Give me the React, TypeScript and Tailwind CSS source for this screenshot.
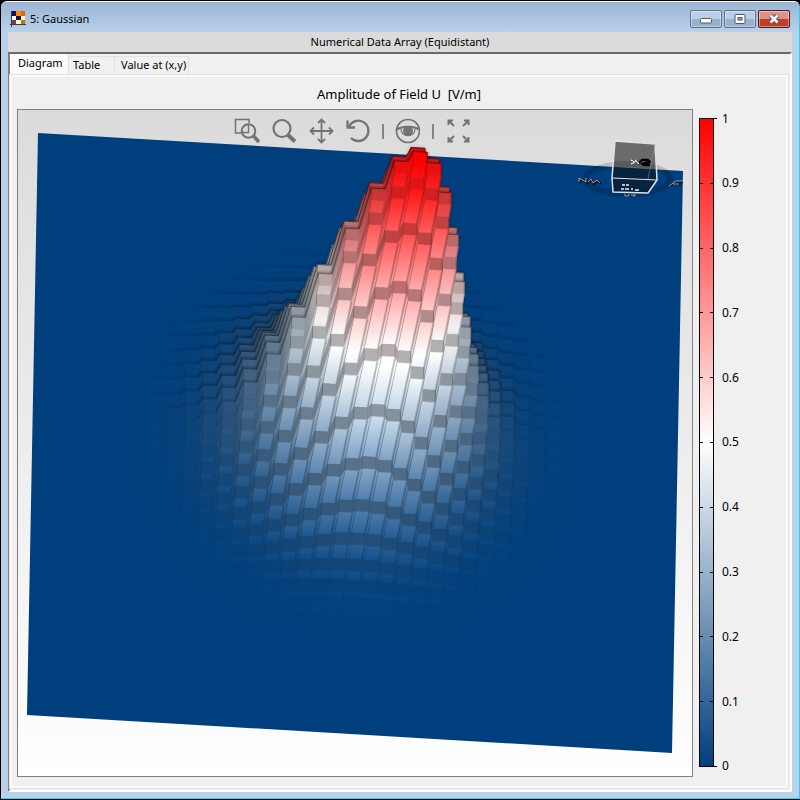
import React from 'react';

type Point = [number, number];
type Rgb = [number, number, number];
type Corner = { x: number; y: number; h: number };

const CELLS = 39;
const MID = (CELLS - 1) / 2;
const INSET = 0.09;
const ORIGIN: Point = [20, 23];
const AXIS_X: Point = [645 / CELLS, 38 / CELLS];
const AXIS_Y: Point = [-11 / CELLS, 582 / CELLS];
const AXIS_Z: Point = [65, -285];

const LOW: Rgb = [0, 63, 125];
const WHITE: Rgb = [255, 255, 255];
const HIGH: Rgb = [255, 0, 0];

const amplitude = (col: number, row: number) =>
  Math.exp(-((col - MID) ** 2) / 27.5 - (row - MID) ** 2 / 25.5);

const project = ({ x, y, h }: Corner): Point => [
  ORIGIN[0] + x * AXIS_X[0] + y * AXIS_Y[0] + h * AXIS_Z[0],
  ORIGIN[1] + x * AXIS_X[1] + y * AXIS_Y[1] + h * AXIS_Z[1],
];

const color = (value: number, light = 1) => {
  const from = value < 0.5 ? LOW : WHITE;
  const to = value < 0.5 ? WHITE : HIGH;
  const t = value < 0.5 ? value * 2 : value * 2 - 1;
  const rgb = from.map((c, i) => Math.min(255, Math.round((c + (to[i] - c) * t) * light)));
  return `rgb(${rgb.join(',')})`;
};

const poly = (corners: Corner[]) =>
  corners
    .map(project)
    .map((p) => `${p[0].toFixed(2)},${p[1].toFixed(2)}`)
    .join(' ');

// grows quickly for small steps, then levels off at max
const soften = (step: number, rate: number, max: number) => max * (1 - Math.exp(-Math.max(0, step) * rate));

// the four corners of a cell's flat top: back left, back right, front right, front left
const topOf = (col: number, row: number): Corner[] => {
  const h = amplitude(col, row);
  return [
    { x: col + INSET, y: row + INSET, h },
    { x: col + 1 - INSET, y: row + INSET, h },
    { x: col + 1 - INSET, y: row + 1 - INSET, h },
    { x: col + INSET, y: row + 1 - INSET, h },
  ];
};

// how brightly a top is lit, given how far its neighbours rise above it
const topLight = (col: number, row: number) => {
  const h = amplitude(col, row);
  const around = [amplitude(col, row + 1), amplitude(col, row - 1), amplitude(col - 1, row), amplitude(col + 1, row)];
  const buried = around.reduce((sum, n) => sum + Math.max(0, n - h), 0);
  return 1 - soften(buried, 9, 0.36);
};

interface SlopeProps {
  id: string;
  corners: Corner[];
  light: number;
}

const Slope: React.FC<SlopeProps> = ({ id, corners, light }) => {
  const heights = corners.map((c) => c.h);
  const top = Math.max(...heights);
  const bottom = Math.min(...heights);
  const fill = `url(#${id})`;
  return (
    <>
      <linearGradient id={id} x1="0" y1="0" x2="0" y2="1">
        <stop offset="0" stopColor={color(top, light)} />
        {top > 0.5 && bottom < 0.5 && <stop offset={(top - 0.5) / (top - bottom)} stopColor={color(0.5, light)} />}
        <stop offset="1" stopColor={color(bottom, light)} />
      </linearGradient>
      <polygon points={poly(corners)} fill={fill} stroke={fill} strokeWidth={0.5} />
    </>
  );
};

interface EdgeProps {
  corners: Corner[];
  width: number;
  opacity: number;
}

const Edge: React.FC<EdgeProps> = ({ corners, width, opacity }) =>
  opacity < 0.01 ? null : (
    <polyline points={poly(corners)} fill="none" stroke="#000" strokeWidth={width} strokeOpacity={opacity.toFixed(3)} />
  );

const Surface = () => {
  const shapes: React.ReactNode[] = [];
  for (let row = 2; row < CELLS - 2; row++) {
    // the columns lean to the right, so each row is painted from right to left
    for (let col = CELLS - 3; col >= 2; col--) {
      const h = amplitude(col, row);
      const back = amplitude(col, row - 1);
      const left = amplitude(col - 1, row);
      const right = amplitude(col + 1, row);
      if (Math.max(h, amplitude(col, row + 1), back, left, right) < 0.0003) continue;

      const light = topLight(col, row);
      const key = `${col}-${row}`;
      const top = topOf(col, row);
      const leftTop = topOf(col - 1, row);
      const outline = [leftTop[1], top[0], top[1]];
      const backDrop = h - back;
      const halo = soften(backDrop, 90, 0.22) * Math.exp(-Math.max(0, backDrop) * 14);
      shapes.push(
        <g key={`t${key}`}>
          <Edge corners={outline} width={6} opacity={halo * 0.7} />
          <Edge corners={outline} width={3} opacity={halo} />
          <polygon points={poly(top)} fill={color(h, light)} stroke={color(h, light)} strokeWidth={0.5} />
          <Slope
            id={`l${key}`}
            corners={[leftTop[1], top[0], top[3], leftTop[2]]}
            light={(light + topLight(col - 1, row)) / 2 - soften(Math.abs(h - left), 14, 0.08)}
          />
          <Edge corners={outline} width={1} opacity={soften(backDrop, 50, 0.55)} />
          <Edge corners={[top[1], top[2]]} width={1.5} opacity={soften(h - right, 40, 0.18)} />
          <Edge corners={[top[0], top[3]]} width={1} opacity={soften(h - left, 40, 0.16)} />
        </g>,
      );
    }
    for (let col = CELLS - 3; col >= 2; col--) {
      const h = amplitude(col, row);
      const front = amplitude(col, row + 1);
      const left = amplitude(col - 1, row);
      const right = amplitude(col + 1, row);
      if (Math.max(h, front, left, right) < 0.0003) continue;

      const key = `${col}-${row}`;
      const drop = Math.max(0, h - front);
      const top = topOf(col, row);
      const frontTop = topOf(col, row + 1);
      const leftTop = topOf(col - 1, row);
      const frontLeftTop = topOf(col - 1, row + 1);
      const nested = soften(Math.max(left, right) - h, 5, 0.18);
      const flat = 0.22 * Math.exp(-drop * 30) * Math.min(1, h * 8);
      const light = 1 + soften(drop, 60, 0.08) - nested - flat;
      const edge = soften(drop, 25, 0.2);
      shapes.push(
        <g key={`f${key}`}>
          <Slope id={`f${key}`} corners={[top[3], top[2], frontTop[1], frontTop[0]]} light={light} />
          <Slope
            id={`c${key}`}
            corners={[leftTop[2], top[3], frontTop[0], frontLeftTop[1]]}
            light={light - soften(Math.abs(h - left), 30, 0.13)}
          />
          <Edge corners={[top[2], frontTop[1]]} width={2} opacity={edge} />
          <Edge corners={[top[3], frontTop[0]]} width={1} opacity={edge} />
          <Edge corners={[leftTop[2], frontLeftTop[1]]} width={1} opacity={edge} />
        </g>,
      );
    }
  }
  return <g>{shapes}</g>;
};

const ViewCube = () => (
  <g fill="none" strokeLinejoin="round">
    <ellipse cx="610" cy="69" rx="42" ry="15" stroke="#000" strokeOpacity="0.16" strokeWidth="6" />
    <path d="M597 31 637 34 639 70 630 83 595 82 594 68Z" fill="#0c0c0c" fillOpacity="0.55" stroke="#dfe3e6" strokeWidth="1.5" />
    <path d="M594 68 639 70" stroke="#dfe3e6" strokeWidth="1.2" />
    <path d="M630 69 637 34" stroke="#999" strokeOpacity="0.5" />
    <path d="M614 51 620 52M620 54l4-4h6l2 2-8 2 2 1h6" stroke="#000" strokeWidth="2.4" />
    <path d="M613 50 617 52 613 54M617 50l4 4" stroke="#fff" strokeWidth="1.2" />
    <path d="M604 75h3M608 75h3M603 79h3M607 79h4M613 79h2M617 80h4" stroke="#eef2f5" strokeWidth="1.6" />
    <path d="M562 73v-4l7 4v-4M571 73l3-3 2 4 4-3 3 3" stroke="#101820" strokeWidth="2.4" />
    <path d="M561 72v-4l7 4v-4M570 72l3-3 2 4 4-3 3 3" stroke="#b7c5d4" strokeWidth="0.8" />
    <path d="M652 76l7-4h6M656 74h7" stroke="#101820" strokeWidth="2.4" />
    <path d="M651 76l7-5h7M655 74h6" stroke="#b7c5d4" strokeWidth="0.8" />
    <path d="M608 84v2h4v-2M614 85h5M616 85v2" stroke="#101820" strokeWidth="2" />
    <path d="M607 84v2h4v-2M613 85h5M616 85v2" stroke="#c3ccd5" strokeWidth="0.8" />
  </g>
);

const TOOLS = [
  {
    label: 'Zoom to rectangle',
    width: 'w-[38px]',
    icon: (
      <>
        <path d="M7 15H1.5V1.5H15V5" strokeWidth="1.5" />
        <circle cx="14.5" cy="13" r="6.8" />
        <path d="M19.5 18 25 24" strokeWidth="3.6" />
        <path d="M14.5 7v7.5H8.5" strokeWidth="1.4" />
      </>
    ),
  },
  {
    label: 'Zoom',
    width: 'w-[37px]',
    icon: (
      <>
        <circle cx="10" cy="10.5" r="8.5" strokeWidth="2.2" />
        <path d="M16 17 23 23.5" strokeWidth="4" />
      </>
    ),
  },
  {
    label: 'Move',
    width: 'w-[37px]',
    icon: <path d="M12.5 1.5v23M1.5 13h22M9 5l3.5-3.500L16 5M9 21l3.500 3.500L16 21M5 9.500 1.500 13 5 16.500M20 9.500l3.500 3.500-3.500 3.500" strokeWidth="1.8" />,
  },
  {
    label: 'Reset view',
    width: 'w-[29px]',
    icon: (
      <>
        <path d="M3 8.500A10.200 10.200 0 1 1 5 20" strokeWidth="2.3" />
        <path d="M1.500 2.500v7H9" strokeWidth="2.3" />
      </>
    ),
  },
  {
    label: 'View options',
    width: 'w-[26px]',
    icon: (
      <>
        <circle cx="14" cy="13" r="11.5" strokeWidth="1.7" />
        <path d="M3 11.500c5-3.500 17-3.500 22 0" strokeWidth="2.2" />
        <path d="M7 11c0 9 14 9 14 0" strokeWidth="1.2" />
        <circle cx="14" cy="13" r="5" fill="#737373" stroke="none" />
      </>
    ),
  },
  {
    label: 'Full size',
    width: 'w-[26px]',
    icon: <path d="M2.5 7V2.500H7M3 3l5 5M18 2.500h4.500V7M22 3l-5 5M2.500 19v4.500H7M3 23l5-5M18 23.500h4.500V19M22 23l-5-5" strokeWidth="2" />,
  },
];

const Tool: React.FC<{ index: number }> = ({ index }) => {
  const tool = TOOLS[index];
  return (
    <button aria-label={tool.label} className={`h-[26px] ${tool.width}`}>
      <svg viewBox="0 0 26 26" className="h-[26px] w-[26px]" fill="none" stroke="#737373" strokeWidth="2">
        {tool.icon}
      </svg>
    </button>
  );
};

const AppIcon = () => (
  <svg viewBox="0 0 16 16" className="h-4 w-4" shapeRendering="crispEdges">
    <path d="M1 0h5v5H1zM6 5h5v4H6z" fill="#1a0f5c" />
    <path d="M6 0h5v5H6z" fill="#ff8c00" />
    <path d="M11 0h4v5h-4zM11 9h4v4h-4z" fill="#d2691e" />
    <path d="M1 5h5v4H1z" fill="#fff" />
    <path d="M11 5h4v4h-4zM6 9h5v4H6z" fill="#ffffb4" />
    <path d="M1 9h5v4H1z" fill="#843c30" />
    <path d="M1.5 0v16M0 13.5h16" stroke="#333a4a" fill="none" />
  </svg>
);

const WINDOW_BUTTON = 'flex h-[18px] w-8 items-center justify-center rounded-[2px] border shadow-[inset_0_0_0_1px_rgba(255,255,255,0.4)]';

const TitleBar = () => (
  <header className="flex h-[30px] items-center rounded-t-[5px] bg-linear-to-b from-[#9ab4d2] to-[#b9d1ea] pr-[9px] pl-[9px] pt-1">
    <AppIcon />
    <h1 className="flex-1 pl-1 text-[11px]">5: Gaussian</h1>
    <div className="flex gap-[2px]">
      <button aria-label="Minimize" className={`${WINDOW_BUTTON} border-[#5d718b] bg-linear-to-b from-[#b9cfe6] from-50% to-[#98b1cc] to-50%`}>
        <svg viewBox="0 0 12 6" className="mt-1 h-[6px] w-3">
          <rect x="0.5" y="0.5" width="11" height="4.5" rx="1" fill="#fff" stroke="#4e5668" />
        </svg>
      </button>
      <button aria-label="Maximize" className={`${WINDOW_BUTTON} border-[#5d718b] bg-linear-to-b from-[#b9cfe6] from-50% to-[#98b1cc] to-50%`}>
        <svg viewBox="0 0 12 10" className="h-[10px] w-3">
          <rect x="1" y="0.5" width="10" height="9" rx="1" fill="#fff" stroke="#4e5668" />
          <rect x="4" y="3.5" width="4" height="2.5" fill="#98b1cc" stroke="#4e5668" />
        </svg>
      </button>
      <button aria-label="Close" className={`${WINDOW_BUTTON} border-[#5a1620] bg-linear-to-b from-[#dc9488] from-50% to-[#bb4129] to-50%`}>
        <svg viewBox="0 0 12 10" className="h-[10px] w-3" fill="none">
          <path d="M2.5 1.5 9.5 8.5M9.5 1.5 2.5 8.5" stroke="#4e5668" strokeWidth="4.6" />
          <path d="M2.5 1.5 9.5 8.5M9.5 1.5 2.5 8.5" stroke="#f4f4f4" strokeWidth="2.6" />
        </svg>
      </button>
    </div>
  </header>
);

const Tabs = () => (
  <div role="tablist" className="flex h-[21px] items-end">
    <button role="tab" aria-selected="true" className="h-[21px] w-[59px] border-r border-[#e2e2e2] bg-[#fafafa] pb-[2px] pl-2 text-left">
      Diagram
    </button>
    <button role="tab" aria-selected="false" className="h-[19px] w-[46px] border-t border-r border-[#e2e2e2] bg-[#f1f1f1] pb-px pl-1 text-left">
      Table
    </button>
    <button role="tab" aria-selected="false" className="h-[19px] w-[74px] border-t border-r border-[#e2e2e2] bg-[#f1f1f1] pb-px pl-[6px] text-left">
      Value at (x,y)
    </button>
  </div>
);

const LEGEND = ['1', '0.9', '0.8', '0.7', '0.6', '0.5', '0.4', '0.3', '0.2', '0.1', '0'];

const ColorBar = () => (
  <div className="mt-[9px] mb-[10px] ml-[6px] flex w-[82px]">
    <div className="relative w-[15px] border border-black bg-[linear-gradient(to_top,#003f7d,#ffffff_50%,#ff0000)]">
      <div className="absolute -inset-y-px right-[-4px] left-0 flex flex-col justify-between">
        {LEGEND.map((label, i) => (
          <div key={label} className={`flex h-px justify-between ${i === 0 || i === 10 ? 'bg-black' : 'pr-[4px]'}`}>
            <span className="w-[3px] bg-black" />
            <span className="w-[3px] bg-black" />
          </div>
        ))}
      </div>
    </div>
    <ul className="flex flex-col justify-between pl-2 text-xs">
      {LEGEND.map((label) => (
        <li key={label} className="flex h-px items-center">
          {label}
        </li>
      ))}
    </ul>
  </div>
);

const Diagram = () => (
  <section className="relative flex min-w-0 flex-1 border border-[#808080] bg-linear-to-b from-[#dbdbdb] to-white">
    <svg viewBox="0 0 674 666" className="h-full w-full" role="img" aria-label="Amplitude of Field U">
      <polygon points="20,23 665,61 654,643 9,605" fill="#003f7d" />
      <Surface />
      <ViewCube />
    </svg>
    <div role="toolbar" className="absolute top-2 left-[216px] flex items-center">
      <Tool index={0} />
      <Tool index={1} />
      <Tool index={2} />
      <Tool index={3} />
      <span className="mr-[10px] ml-[7px] h-[15px] w-[2px] bg-[#858585]" />
      <Tool index={4} />
      <span className="mr-[12px] ml-[12px] h-[15px] w-[2px] bg-[#858585]" />
      <Tool index={5} />
    </div>
  </section>
);

const App = () => (
  <div className="h-screen bg-black pt-px pb-px pl-[1px] font-['Noto_Sans','Open_Sans',sans-serif] text-[11px] text-black">
    <div className="flex h-full flex-col rounded-t-md border-t border-r border-b border-t-white border-r-[#25d3ee] border-b-[#25d3ee] bg-[#b9d1ea]">
      <TitleBar />
      <main className="mx-[7px] mb-[6px] flex min-h-0 flex-1 flex-col bg-[#dbdbdb]">
        <h2 className="flex h-5 items-center justify-center">Numerical Data Array (Equidistant)</h2>
        <div className="flex min-h-0 flex-1 flex-col border-t-2 border-r-2 border-b-2 border-l-2 border-t-[#696969] border-r-white border-b-white border-l-[#808080] bg-[#f0f0f0]">
          <Tabs />
          <div role="tabpanel" className="mr-[2px] mb-[2px] flex min-h-0 flex-1 flex-col border-2 border-[#fafafa] px-[5px] pb-[9px] shadow-[0_0_0_1px_#e3e3e3]">
            <h3 className="flex h-8 items-center justify-center pt-[3px] text-[13px] whitespace-pre">Amplitude of Field U  [V/m]</h3>
            <div className="flex min-h-0 flex-1">
              <Diagram />
              <ColorBar />
            </div>
          </div>
        </div>
      </main>
    </div>
  </div>
);

export default App;
